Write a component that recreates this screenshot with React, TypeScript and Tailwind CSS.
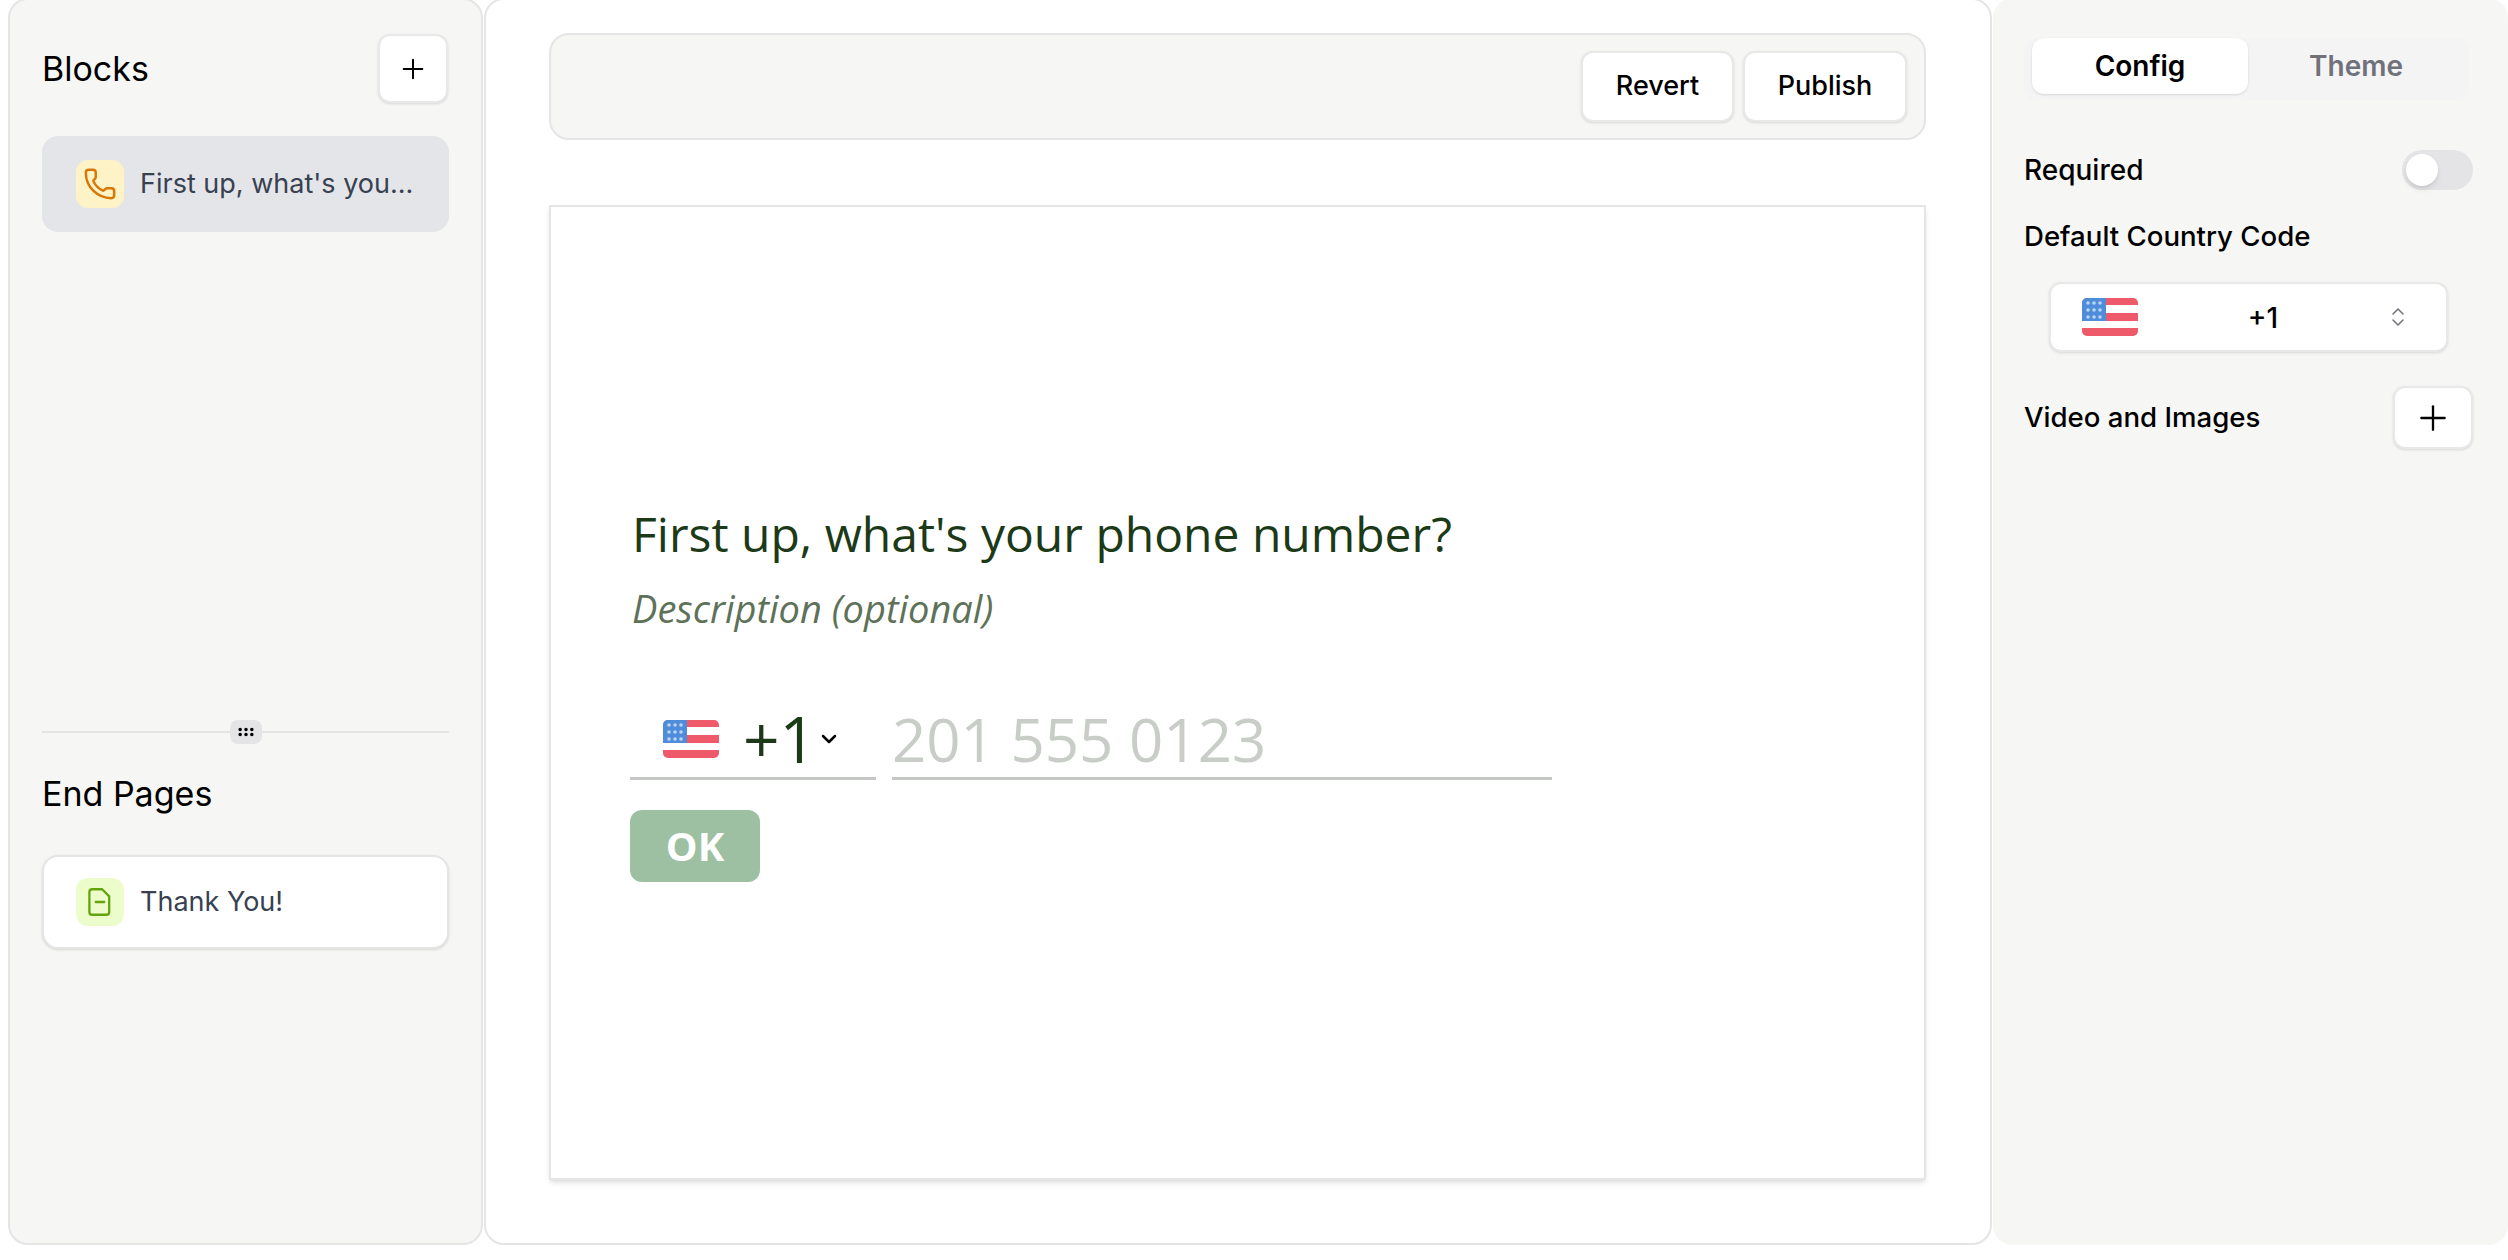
import React from "react";
import { ChevronDown, ChevronsUpDown, GripHorizontal, Phone, Plus } from "lucide-react";

const UsFlag = ({ className }: { className: string }) => (
  <svg viewBox="0 0 56 38" className={className}>
    <rect width="56" height="38" rx="5" fill="#ffffff" />
    <path d="M5 0h46a5 5 0 0 1 5 5v2H0V5a5 5 0 0 1 5-5Z" fill="#ef5a6b" />
    <rect y="15" width="56" height="8" fill="#ef5a6b" />
    <path d="M0 30h56v3a5 5 0 0 1-5 5H5a5 5 0 0 1-5-5Z" fill="#ef5a6b" />
    <path d="M5 0h19v23H0V5a5 5 0 0 1 5-5Z" fill="#4f8ddb" />
    {[5, 12, 19].map((y) =>
      [6, 12, 18].map((x) => <circle key={`${x}-${y}`} cx={x} cy={y} r="1.8" fill="#b9d5f5" />),
    )}
  </svg>
);

const PageIcon = () => (
  <svg viewBox="0 0 24 24" fill="none" stroke="currentColor" strokeWidth="1.6" strokeLinecap="round" strokeLinejoin="round" className="h-[34px] w-[34px] text-[#65a30d]">
    <path d="M6.5 3h7l5 5v11a2 2 0 0 1-2 2h-10a2 2 0 0 1-2-2V5a2 2 0 0 1 2-2Z" />
    <path d="M9 12h6" />
  </svg>
);

const BlockRow = ({
  label,
  active,
  icon,
  iconBg,
}: {
  label: string;
  active?: boolean;
  icon: React.ReactNode;
  iconBg: string;
}) => (
  <div
    className={
      active
        ? "flex h-[96px] items-center rounded-2xl bg-[#e4e5e9] pl-[34px]"
        : "flex h-[94px] items-center rounded-2xl border-2 border-[#e5e5e5] bg-white pl-[32px] shadow-sm"
    }
  >
    <div className={`flex h-12 w-12 items-center justify-center rounded-xl ${iconBg}`}>{icon}</div>
    <span className="ml-[16px] text-[27px] text-[#374151]">{label}</span>
  </div>
);

const App = () => {
  return (
    <div className="h-[1260px] w-[2508px] overflow-hidden bg-white font-['Inter',sans-serif] text-black">
      <div className="-mt-[2px] flex h-[1247px] pl-[8px]">
        {/* blocks list */}
        <aside className="flex w-[475px] flex-col rounded-[20px] border-2 border-[#e5e5e5] bg-[#f6f6f4] px-[32px]">
          <div className="h-[731px]">
            <div className="flex h-[136px] items-center justify-between pt-[1px]">
              <h2 className="text-[34px] leading-none">Blocks</h2>
              <button className="mr-[1px] flex h-[69px] w-[70px] items-center justify-center rounded-xl border-2 border-[#e8e8e8] bg-white shadow-sm">
                <Plus className="h-8 w-8" strokeWidth={1.5} />
              </button>
            </div>
            <BlockRow
              active
              label="First up, what's you..."
              iconBg="bg-[#fef3c7]"
              icon={<Phone className="h-[34px] w-[34px] text-[#d97706]" strokeWidth={1.75} />}
            />
          </div>
          <div className="relative h-[2px] bg-[#e5e5e5]">
            <div className="absolute top-[-11px] left-[188px] flex h-6 w-8 items-center justify-center rounded-lg bg-[#e4e4e7]">
              <GripHorizontal className="h-5 w-5 text-black" strokeWidth={2.25} />
            </div>
          </div>
          <h2 className="mt-[44px] h-[78px] text-[34px] leading-[34px]">End Pages</h2>
          <BlockRow label="Thank You!" iconBg="bg-[#ecfccb]" icon={<PageIcon />} />
        </aside>

        {/* canvas */}
        <main className="ml-[1px] flex w-[1508px] flex-col rounded-[20px] border-2 border-[#e5e5e5] bg-white pr-[64px] pl-[63px] pt-[33px]">
          <div className="flex h-[107px] items-center justify-end gap-[9px] rounded-[20px] border-2 border-[#e5e5e5] bg-[#f6f6f4] pr-[17px]">
            <button className="h-[71px] w-[153px] rounded-xl border-2 border-[#e8e8e8] bg-white text-[27px] font-medium shadow-sm">
              Revert
            </button>
            <button className="h-[71px] w-[164px] rounded-xl border-2 border-[#e8e8e8] bg-white text-[27px] font-medium shadow-sm">
              Publish
            </button>
          </div>
          <div className="mt-[65px] flex h-[975px] flex-col justify-center border-2 border-[#e5e5e5] bg-white pb-[2px] pl-[79px] font-['Open_Sans',sans-serif] shadow-md">
            <h1 className="ml-[2px] text-[48px] leading-[64px] text-[#1c3a17]">First up, what's your phone number?</h1>
            <p className="mt-[18px] ml-[2px] text-[38px] leading-[48px] text-[#5e7159] italic">Description (optional)</p>
            <div className="mt-[65px] flex gap-4">
              <div className="flex h-[83px] w-[246px] items-center border-b-[3px] border-[#c4c7c3] pt-[5px] pl-[33px]">
                <UsFlag className="h-[38px] w-[56px]" />
                <span className="ml-[24px] text-[64px] leading-none text-[#1c3a17]">+1</span>
                <ChevronDown className="ml-[1px] h-6 w-6" strokeWidth={2.5} />
              </div>
              <div className="flex h-[83px] w-[660px] items-center border-b-[3px] border-[#c4c7c3] pt-[5px] text-[60px] leading-none text-[#c9cdc8]">
                201 555 0123
              </div>
            </div>
            <button className="mt-[30px] h-[72px] w-[130px] rounded-xl bg-[#9dbfa2] text-[40px] font-bold text-white">
              OK
            </button>
          </div>
        </main>

        {/* settings */}
        <aside className="ml-[1px] flex flex-1 flex-col rounded-[20px] bg-[#f6f6f5] pr-[35px] pl-[31px] pt-[40px]">
          <div className="mr-[4px] flex h-[62px] rounded-xl bg-[#f4f4f5]">
            <div className="ml-[8px] flex h-[56px] w-[216px] items-center justify-center rounded-xl bg-white text-[28px] font-semibold shadow-sm">
              Config
            </div>
            <div className="flex h-[56px] w-[216px] items-center justify-center text-[28px] font-semibold text-[#71717a]">
              Theme
            </div>
          </div>
          <div className="mt-[50px] flex h-10 items-center justify-between">
            <span className="text-[28px] font-medium">Required</span>
            <div className="flex h-10 w-[71px] items-center rounded-full bg-[#e4e4e7] pl-[4px]">
              <div className="h-8 w-8 rounded-full bg-white shadow-md" />
            </div>
          </div>
          <div className="mt-[26px] text-[27.6px] leading-[40px] font-medium">Default Country Code</div>
          <div className="mt-[26px] ml-[25px] flex h-[70px] w-[399px] items-center rounded-xl border-2 border-[#e8e8e8] bg-white pr-[36px] pl-[31px] shadow-sm">
            <UsFlag className="h-[38px] w-[56px]" />
            <span className="flex-1 pt-[2px] pl-[2px] text-center text-[28px] font-medium">+1</span>
            <ChevronsUpDown className="h-6 w-6 text-[#71717a]" strokeWidth={1.5} />
          </div>
          <div className="mt-[34px] flex items-center justify-between">
            <span className="text-[27.6px] font-medium">Video and Images</span>
            <button className="flex h-[63px] w-[80px] items-center justify-center rounded-xl border-2 border-[#e8e8e8] bg-white shadow-sm">
              <Plus className="h-10 w-10" strokeWidth={1.4} />
            </button>
          </div>
        </aside>
      </div>
    </div>
  );
};

export default App;
